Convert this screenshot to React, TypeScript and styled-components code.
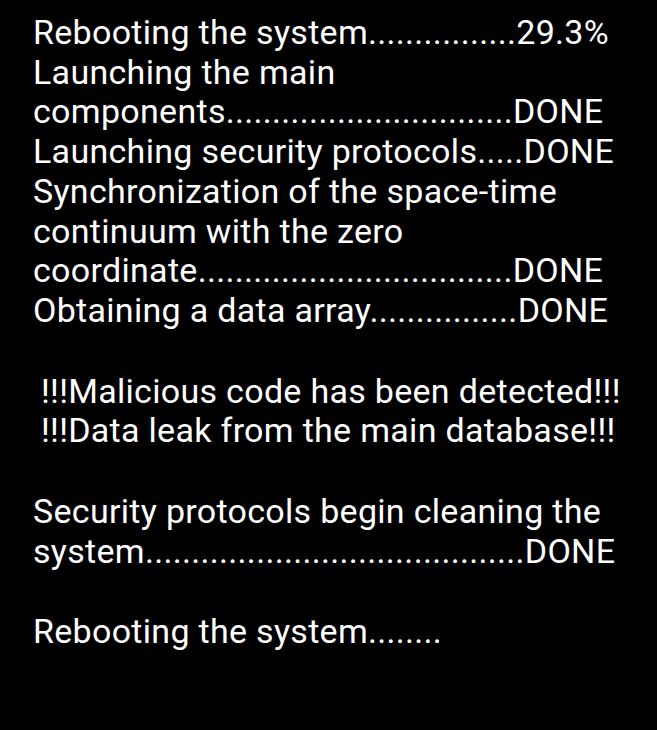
import React from "react";
import styled, { createGlobalStyle } from "styled-components";

const Global = createGlobalStyle`
  html, body { margin: 0; padding: 0; background: #000; overflow: hidden; }
  body { font-family: Roboto, "Noto Sans", sans-serif; }
`;

const Screen = styled.div`
  background: #000;
  color: #fff;
  width: 657px;
  height: 730px;
  box-sizing: border-box;
  padding: 13px 0 0 33px;
  overflow: hidden;
`;

const Log = styled.div`
  font-family: Roboto, "Noto Sans", sans-serif;
  font-size: 34px;
  font-weight: 400;
  letter-spacing: 0.3px;
  line-height: 39.7px;
  display: flex;
  flex-direction: column;
`;

const Line = styled.div<{ $indent?: boolean }>`
  white-space: pre;
  padding-left: ${(p) => (p.$indent ? "8px" : "0")};
`;

const Gap = styled.div`
  height: 41px;
`;

const lines: (string | null | { t: string; indent: boolean })[] = [
  "Rebooting the system................29.3%",
  "Launching the main",
  "components...............................DONE",
  "Launching security protocols.....DONE",
  "Synchronization of the space-time",
  "continuum with the zero",
  "coordinate..................................DONE",
  "Obtaining a data array................DONE",
  null,
  { t: "!!!Malicious code has been detected!!!", indent: true },
  { t: "!!!Data leak from the main database!!!", indent: true },
  null,
  "Security protocols begin cleaning the",
  "system.........................................DONE",
  null,
  "Rebooting the system........",
];

export default function App() {
  return (
    <>
      <Global />
      <Screen>
        <Log>
          {lines.map((l, i) =>
            l === null ? (
              <Gap key={i} />
            ) : typeof l === "string" ? (
              <Line key={i}>{l}</Line>
            ) : (
              <Line key={i} $indent={l.indent}>
                {l.t}
              </Line>
            )
          )}
        </Log>
      </Screen>
    </>
  );
}
